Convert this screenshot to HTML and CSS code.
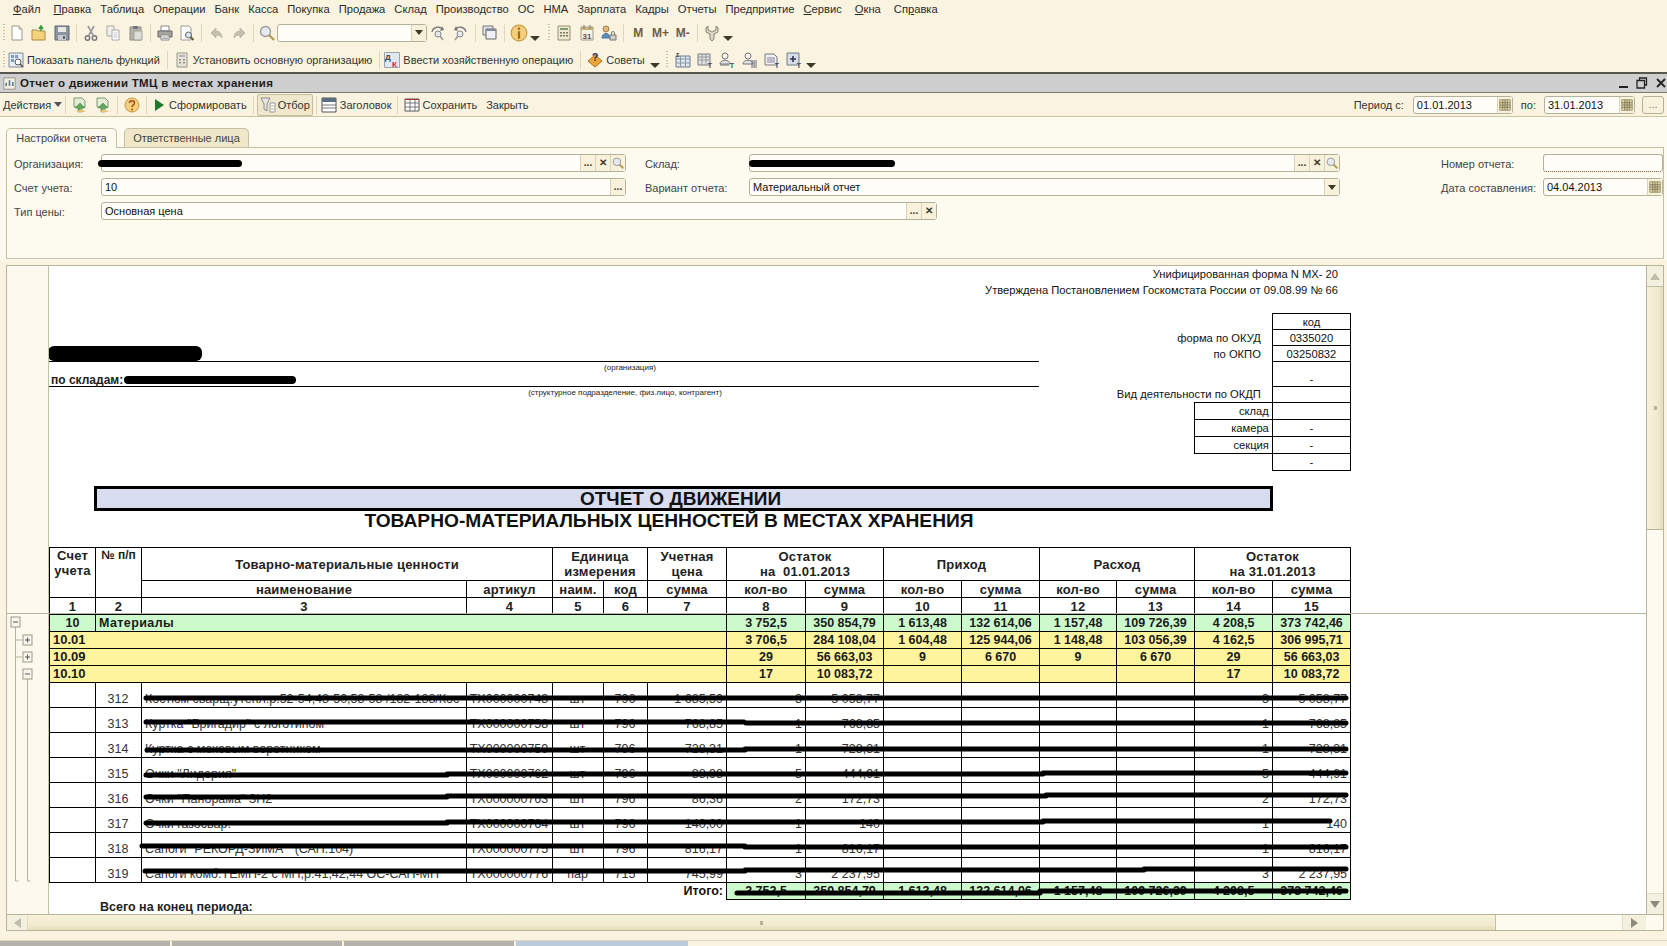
FILE: index.html
```html
<!DOCTYPE html>
<html lang="ru">
<head>
<meta charset="utf-8">
<title>Отчет о движении ТМЦ в местах хранения</title>
<link rel="stylesheet" href="styles.css">
</head>
<body>
<svg class="defs" width="0" height="0">
  <symbol id="i-new" viewBox="0 0 16 16"><path d="M3 1h7l3 3v11H3z" fill="#fff" stroke="#9a9a90"/><path d="M10 1v3h3" fill="#e8e8e0" stroke="#9a9a90"/></symbol>
  <symbol id="i-open" viewBox="0 0 16 16"><path d="M1 5h5l1 1h7v9H1z" fill="#f3d27a" stroke="#a98d4a"/><path d="M10 6V2M8 4l2-3 2 3" fill="none" stroke="#3d9a3d" stroke-width="1.6"/></symbol>
  <symbol id="i-save" viewBox="0 0 16 16"><path d="M1 1h14v14H1z" fill="#8c94a0" stroke="#5e6470"/><path d="M4 2h8v5H4z" fill="#e8e8e4"/><path d="M4 10h8v5H4z" fill="#c5c8cc"/><path d="M9 11h2v3H9z" fill="#5e6470"/></symbol>
  <symbol id="i-cut" viewBox="0 0 16 16"><circle cx="4.500" cy="13" r="2.200" fill="none" stroke="#777" stroke-width="1.400"/><circle cx="11.500" cy="13" r="2.200" fill="none" stroke="#777" stroke-width="1.400"/><path d="M5.500 11L11 1M10.500 11L5 1" stroke="#999" stroke-width="1.600"/></symbol>
  <symbol id="i-copy" viewBox="0 0 16 16"><path d="M2 1h7v10H2z" fill="#f0efe8" stroke="#aaa"/><path d="M7 5h7v10H7z" fill="#fff" stroke="#aaa"/><path d="M8.500 8h4M8.500 10h4M8.500 12h4" stroke="#c4c4c4"/></symbol>
  <symbol id="i-paste" viewBox="0 0 16 16"><path d="M2 2h11v13H2z" fill="#b3b3ab" stroke="#8c8c84"/><path d="M5 1h5v3H5z" fill="#777"/><path d="M6 6h8v9H6z" fill="#deded8" stroke="#a2a29a"/></symbol>
  <symbol id="i-print" viewBox="0 0 16 16"><path d="M4 1h8v5H4z" fill="#fff" stroke="#888"/><path d="M1 6h14v6H1z" fill="#a5a5a0" stroke="#666"/><path d="M4 10h8v5H4z" fill="#fff" stroke="#888"/><path d="M5 12h6M5 13.500h6" stroke="#aaa"/></symbol>
  <symbol id="i-preview" viewBox="0 0 16 16"><path d="M2 1h8l2 2v12H2z" fill="#fff" stroke="#999"/><circle cx="9.500" cy="10" r="3" fill="#d9e5f2" stroke="#666"/><path d="M11.500 12l3 3" stroke="#6b5a2a" stroke-width="2"/></symbol>
  <symbol id="i-undo" viewBox="0 0 16 16"><path d="M7 3L2 8l5 5V10c3 0 5 1 6 3 0-5-3-7-6-7z" fill="#c4c0b0" stroke="#aaa695" stroke-width=".6"/></symbol>
  <symbol id="i-redo" viewBox="0 0 16 16"><path d="M9 3l5 5-5 5V10c-3 0-5 1-6 3 0-5 3-7 6-7z" fill="#c4c0b0" stroke="#aaa695" stroke-width=".6"/></symbol>
  <symbol id="i-search" viewBox="0 0 16 16"><circle cx="6.500" cy="6.500" r="5" fill="#e4eaf0" stroke="#9a9a9a" stroke-width="1.300"/><path d="M10 10l5 5" stroke="#b39a5c" stroke-width="2.400"/></symbol>
  <symbol id="i-nav-l" viewBox="0 0 16 16"><path d="M2 7a6 6 0 0 1 11-2" fill="none" stroke="#777" stroke-width="1.300"/><path d="M12 1l2 4-4 1z" fill="#777"/><circle cx="8" cy="9" r="3" fill="#e4eaf0" stroke="#888"/><path d="M10 11l3 4" stroke="#999" stroke-width="1.500"/></symbol>
  <symbol id="i-nav-r" viewBox="0 0 16 16"><path d="M14 7a6 6 0 0 0-11-2" fill="none" stroke="#777" stroke-width="1.300"/><path d="M4 1L2 5l4 1z" fill="#777"/><circle cx="8" cy="9" r="3" fill="#e4eaf0" stroke="#888"/><path d="M6 11l-3 4" stroke="#999" stroke-width="1.500"/></symbol>
  <symbol id="i-win" viewBox="0 0 16 16"><path d="M1 1h10v9H1z" fill="#dfe3e8" stroke="#777"/><path d="M4 4h10v10H4z" fill="#eef0f3" stroke="#666"/><path d="M4 4h10v2H4z" fill="#7f8a99"/></symbol>
  <symbol id="i-info" viewBox="0 0 16 16"><circle cx="8" cy="8" r="7" fill="#f5cf7c" stroke="#c79a45"/><path d="M7 6.500h2V13H7zM7 3h2v2H7z" fill="#a5691e"/></symbol>
  <symbol id="i-help" viewBox="0 0 16 16"><circle cx="8" cy="8" r="7" fill="#f5cf7c" stroke="#c79a45"/><path d="M5.500 6c0-3 5-3 5 0 0 2-2.500 2-2.500 4M8 11.500v2" fill="none" stroke="#a5491e" stroke-width="1.500"/></symbol>
  <symbol id="i-calc" viewBox="0 0 16 16"><path d="M2 1h12v14H2z" fill="#eee9d2" stroke="#98936e"/><path d="M4 3h8v2H4z" fill="#7f9a6e"/><path d="M4 7h2v1.500H4zM7 7h2v1.500H7zM10 7h2v1.500h-2zM4 10h2v1.500H4zM7 10h2v1.500H7zM10 10h2v1.500h-2z" fill="#7a7a60"/></symbol>
  <symbol id="i-users" viewBox="0 0 16 16"><circle cx="5" cy="4" r="3" fill="#e6b678" stroke="#a27d48"/><path d="M1 13c0-6 8-6 8 0z" fill="#5c8fc0" stroke="#44709c"/><path d="M9 10h6v5H9z" fill="#cfcfc8" stroke="#777"/><path d="M10.500 10V8a1.500 1.500 0 0 1 3 0v2" fill="none" stroke="#777"/></symbol>
  <symbol id="i-wrench" viewBox="0 0 16 16"><path d="M4 1v4l4 2 4-2V1l2 2v4l-4 2v5l-2 2-2-2V9L2 7V3z" fill="#dedacb" stroke="#85816f"/></symbol>
  <symbol id="i-panel" viewBox="0 0 16 16"><path d="M1 1h14v14H1z" fill="#e8edf3" stroke="#7e8a9a"/><path d="M3 3h3v3H3zM7 3h3v3H7zM3 7h3v3H3z" fill="#7d9bc0"/><circle cx="10" cy="10" r="3" fill="#fff" stroke="#555"/><path d="M12 12l3 3" stroke="#555" stroke-width="1.600"/></symbol>
  <symbol id="i-build" viewBox="0 0 16 16"><path d="M3 1h10v14H3z" fill="#e6e4d8" stroke="#9a988a"/><path d="M5 3h6v2H5z" fill="#b0b7c0"/><path d="M5 7h2v1.500H5zM9 7h2v1.500H9zM5 10h2v1.500H5zM9 10h2v1.500H9z" fill="#8f8f84"/></symbol>
  <symbol id="i-filter" viewBox="0 0 16 16"><path d="M1 1h9L7 7v7l-3-2V7z" fill="#e6e6df" stroke="#888"/><path d="M10 6h5v9h-5z" fill="#fff" stroke="#999"/><path d="M10 9h5M10 12h5" stroke="#b6b6b0"/></symbol>
  <symbol id="i-head" viewBox="0 0 16 16"><path d="M1 1h14v14H1z" fill="#fff" stroke="#555"/><path d="M1 1h14v4H1z" fill="#5b6d80"/><path d="M1 8h14M1 11h14" stroke="#777"/></symbol>
  <symbol id="i-grid" viewBox="0 0 16 16"><path d="M1 2h14v12H1z" fill="#fff" stroke="#555"/><path d="M1 6h14M1 10h14M6 2v12M11 2v12" stroke="#777"/><path d="M1 2h14v1H1z" fill="#a33"/></symbol>
  <symbol id="i-imp" viewBox="0 0 16 16"><path d="M2 1h8l3 3v6H2z" fill="#e4ecd8" stroke="#7f9a6e"/><path d="M8 6L3 11h3v4h4v-4h3z" fill="#5fa85f" stroke="#3c7f3c" stroke-width=".5"/><path d="M9 12l5 3H4z" fill="#e3c277"/></symbol>
  <symbol id="i-rep" viewBox="0 0 16 16"><path d="M1 1h14v14H1z" fill="#f3efe0" stroke="#888"/><path d="M4 11V7M8 11V4M12 11V6" stroke="#5a7a9f" stroke-width="2"/></symbol>
  <symbol id="i-cells" viewBox="0 0 16 16"><path d="M1 1h14v14H1z" fill="#e6d9a5" stroke="#8a7f55"/><path d="M1 5h14M1 8h14M1 11h14M5 1v14M8 1v14M11 1v14" stroke="#6d6a50"/></symbol>
</svg>

<div class="app">
  <nav class="menu">
    <span class="m m-file"><u>Ф</u>айл</span><span class="m"><u>П</u>равка</span><span class="m">Таблица</span><span class="m">Операции</span><span class="m">Банк</span><span class="m">Касса</span><span class="m">Покупка</span><span class="m">Продажа</span><span class="m">Склад</span><span class="m">Производство</span><span class="m">ОС</span><span class="m">НМА</span><span class="m">Зарплата</span><span class="m">Кадры</span><span class="m">Отчеты</span><span class="m">Предприятие</span><span class="m m-srv"><u>С</u>ервис</span><span class="m m-win"><u>О</u>кна</span><span class="m">Сп<u>р</u>авка</span>
  </nav>

  <div class="toolbar tb1">
    <i class="grip"></i>
    <b class="btn"><svg class="ico"><use href="#i-new"/></svg></b>
    <b class="btn"><svg class="ico"><use href="#i-open"/></svg></b>
    <b class="btn"><svg class="ico"><use href="#i-save"/></svg></b>
    <i class="sep"></i>
    <b class="btn"><svg class="ico"><use href="#i-cut"/></svg></b>
    <b class="btn"><svg class="ico"><use href="#i-copy"/></svg></b>
    <b class="btn"><svg class="ico"><use href="#i-paste"/></svg></b>
    <i class="sep"></i>
    <b class="btn"><svg class="ico"><use href="#i-print"/></svg></b>
    <b class="btn"><svg class="ico"><use href="#i-preview"/></svg></b>
    <i class="sep"></i>
    <b class="btn"><svg class="ico"><use href="#i-undo"/></svg></b>
    <b class="btn"><svg class="ico"><use href="#i-redo"/></svg></b>
    <i class="sep"></i>
    <b class="btn btn-s"><svg class="ico"><use href="#i-search"/></svg></b>
    <div class="combo"><span class="combo-arrow"><i class="tri"></i></span></div>
    <b class="btn"><svg class="ico"><use href="#i-nav-l"/></svg></b>
    <b class="btn"><svg class="ico"><use href="#i-nav-r"/></svg></b>
    <i class="sep"></i>
    <b class="btn"><svg class="ico"><use href="#i-win"/></svg></b>
    <i class="sep"></i>
    <b class="btn"><svg class="ico ico-lg"><use href="#i-info"/></svg></b>
    <i class="drop"></i>
    <i class="grip grip-mid"></i>
    <b class="btn"><svg class="ico"><use href="#i-calc"/></svg></b>
    <b class="btn"><svg class="ico" viewBox="0 0 16 16"><path d="M2 2h12v13H2z" fill="#f6f2e2" stroke="#a29c82"/><path d="M2 2h12v3H2z" fill="#c9b27a"/><path d="M5 0v4M11 0v4" stroke="#777"/><text x="8" y="13.500" class="ico-text ico-31">31</text></svg></b>
    <b class="btn"><svg class="ico"><use href="#i-users"/></svg></b>
    <i class="sep"></i>
    <b class="btn mem">M</b><b class="btn mem">M+</b><b class="btn mem">M-</b>
    <i class="sep"></i>
    <b class="btn"><svg class="ico"><use href="#i-wrench"/></svg></b>
    <i class="drop"></i>
  </div>

  <div class="toolbar tb2">
    <i class="grip"></i>
    <span class="tool tool-first"><svg class="ico"><use href="#i-panel"/></svg>Показать панель функций</span>
    <i class="sep"></i>
    <span class="tool"><svg class="ico"><use href="#i-build"/></svg>Установить основную организацию</span>
    <i class="sep"></i>
    <span class="tool tool-tight"><svg class="ico" viewBox="0 0 16 16"><path d="M.5.5h15v15H.5z" fill="#e3e7ee" stroke="#9aa4b3"/><text x="1" y="8" class="ico-text ico-d">Д</text><text x="8" y="15" class="ico-text ico-k">К</text></svg>Ввести хозяйственную операцию</span>
    <i class="sep"></i>
    <span class="tool"><svg class="ico" viewBox="0 0 16 16"><path d="M1 9l7-6 7 6-7 6z" fill="#eda53a" stroke="#b06e18"/><text x="8" y="9" class="ico-text ico-q">?</text></svg>Советы</span>
    <i class="drop drop-tips"></i>
    <i class="grip grip-tips"></i>
    <b class="btn"><svg class="ico" viewBox="0 0 16 16"><path d="M1 4h14v11H1z" fill="#dfe6ee" stroke="#6f7c8c"/><path d="M1 7h14M1 11h14M5.500 4v11M10.500 4v11" stroke="#8a97a8"/><text x="1" y="5" class="ico-text ico-s5">Σ</text></svg></b>
    <b class="btn"><svg class="ico" viewBox="0 0 16 16"><path d="M1 2h12v11H1z" fill="#dfe3e8" stroke="#7a7a7a"/><path d="M1 5h12M1 8h12M5 2v11M9 2v11" stroke="#999"/><text x="13" y="16" class="ico-text ico-t">Т</text></svg></b>
    <b class="btn"><svg class="ico" viewBox="0 0 16 16"><circle cx="6" cy="4" r="3" fill="#f4f2ea" stroke="#777"/><path d="M1 12c0-5 10-5 10 0z" fill="#dfe3e8" stroke="#777"/><path d="M1 13h9" stroke="#777"/><text x="13" y="16" class="ico-text ico-t">Т</text></svg></b>
    <b class="btn"><svg class="ico" viewBox="0 0 16 16"><circle cx="6" cy="4" r="3" fill="#f4f2ea" stroke="#777"/><path d="M1 12c0-5 10-5 10 0z" fill="#dfe3e8" stroke="#777"/><path d="M9 9h6M9 11h6M9 13h6M9 15h6" stroke="#667"/></svg></b>
    <b class="btn"><svg class="ico" viewBox="0 0 16 16"><path d="M1 2h9l3 3v8H1z" fill="#eef0f3" stroke="#7a7a7a"/><path d="M3 6h8M3 8h8M3 10h8" stroke="#889"/><text x="13" y="16" class="ico-text ico-t">Т</text></svg></b>
    <b class="btn"><svg class="ico" viewBox="0 0 16 16"><path d="M1 1h12v12H1z" fill="#d6dde6" stroke="#6f7c8c"/><path d="M4 7h6M7 4v6" stroke="#335" stroke-width="1.600"/><text x="13" y="16" class="ico-text ico-t">Т</text></svg></b>
    <i class="drop"></i>
  </div>

  <header class="titlebar">
    <svg class="ico"><use href="#i-rep"/></svg>
    <span class="title">Отчет о движении ТМЦ в местах хранения</span>
    <span class="winctl">
      <i class="w-min"></i>
      <svg class="w-restore" viewBox="0 0 12 12"><path d="M3.500 3V1h7v7H8.500M1 3.500h7.500V11H1z" fill="none" stroke="#222" stroke-width="1.300"/></svg>
      <svg class="w-close" viewBox="0 0 10 10"><path d="M1 1l8 8M9 1l-8 8" stroke="#222" stroke-width="1.800"/></svg>
    </span>
  </header>

  <div class="cmdbar">
    <span class="cmd cmd-act">Действия<i class="tri tri-act"></i></span>
    <i class="sep"></i>
    <b class="btn"><svg class="ico"><use href="#i-imp"/></svg></b>
    <b class="btn"><svg class="ico"><use href="#i-imp"/></svg></b>
    <i class="sep"></i>
    <b class="btn"><svg class="ico"><use href="#i-help"/></svg></b>
    <i class="sep"></i>
    <span class="cmd cmd-run"><i class="play"></i>Сформировать</span>
    <i class="sep"></i>
    <span class="cmd cmd-on"><svg class="ico"><use href="#i-filter"/></svg>Отбор</span>
    <i class="sep sep-tight"></i>
    <span class="cmd cmd-head"><svg class="ico"><use href="#i-head"/></svg>Заголовок</span>
    <i class="sep"></i>
    <span class="cmd"><svg class="ico"><use href="#i-grid"/></svg>Сохранить</span>
    <span class="cmd cmd-close">Закрыть</span>
    <div class="period">
      <label class="period-l">Период с:</label>
      <div class="field f-date1"><span class="val">01.01.2013</span><span class="fbtn"><svg class="ico ico-s"><use href="#i-cells"/></svg></span></div>
      <label class="period-l2">по:</label>
      <div class="field f-date2"><span class="val">31.01.2013</span><span class="fbtn"><svg class="ico ico-s"><use href="#i-cells"/></svg></span></div>
      <div class="field f-more">...</div>
    </div>
  </div>

  <section class="formarea">
    <div class="tabs">
      <span class="tab tab-on">Настройки отчета</span>
      <span class="tab">Ответственные лица</span>
    </div>
    <div class="panel">
      <div class="frow">
        <label class="lab lab-a">Организация:</label>
        <div class="field f-a"><i class="ink ink-org"></i><span class="val"></span><span class="fbtn dots">...</span><span class="fbtn x">✕</span><span class="fbtn"><svg class="ico ico-s"><use href="#i-search"/></svg></span></div>
        <label class="lab lab-b">Склад:</label>
        <div class="field f-b"><i class="ink ink-sklad"></i><span class="val"></span><span class="fbtn dots">...</span><span class="fbtn x">✕</span><span class="fbtn"><svg class="ico ico-s"><use href="#i-search"/></svg></span></div>
        <label class="lab lab-c">Номер отчета:</label>
        <div class="field f-c f-dotted"></div>
      </div>
      <div class="frow">
        <label class="lab lab-a">Счет учета:</label>
        <div class="field f-a"><span class="val">10</span><span class="fbtn dots">...</span></div>
        <label class="lab lab-b">Вариант отчета:</label>
        <div class="field f-b"><span class="val">Материальный отчет</span><span class="fbtn"><i class="tri"></i></span></div>
        <label class="lab lab-c">Дата составления:</label>
        <div class="field f-c"><span class="val">04.04.2013</span><span class="fbtn"><svg class="ico ico-s"><use href="#i-cells"/></svg></span></div>
      </div>
      <div class="frow">
        <label class="lab lab-a">Тип цены:</label>
        <div class="field f-t"><span class="val">Основная цена</span><span class="fbtn dots">...</span><span class="fbtn x">✕</span></div>
      </div>
    </div>
  </section>

  <section class="report">
    <div class="report-main">
      <div class="gutter">
        <svg class="tree" viewBox="7 266 41 648">
          <path d="M15.500 627V881h3M27.500 678V881h3M16 640h6M16 657h6" fill="none" stroke="#b5b39c"/>
          <g fill="#f8f6ec" stroke="#9c9a88"><rect x="11" y="617" width="9" height="10"/><rect x="23" y="635" width="9" height="10"/><rect x="23" y="652" width="9" height="10"/><rect x="23" y="669" width="9" height="10"/></g>
          <path d="M13 622h5M25 640h5M27.500 637.500v5M25 657h5M27.500 654.500v5M25 674h5" stroke="#555"/>
        </svg>
      </div>
      <div class="sheet">
        <div class="form-note">Унифицированная форма N МХ- 20</div>
        <div class="form-note">Утверждена Постановлением Госкомстата России от 09.08.99 № 66</div>

        <div class="head">
          <div class="head-left">
            <div class="org-line"><i class="ink ink-name"></i></div>
            <div class="caption cap-org">(организация)</div>
            <div class="org-line org-line2">по складам:<i class="ink ink-wh"></i></div>
            <div class="caption cap-dep">(структурное подразделение, физ.лицо, контрагент)</div>
          </div>
          <table class="codes">
            <colgroup><col class="c-l"><col class="c-m"><col class="c-r"></colgroup>
            <tr class="r16"><td colspan="2" class="nb"></td><td class="cc">код</td></tr>
            <tr class="r16"><td colspan="2" class="nb rt">форма по ОКУД</td><td class="cc">0335020</td></tr>
            <tr class="r16"><td colspan="2" class="nb rt">по ОКПО</td><td class="cc">03250832</td></tr>
            <tr class="r25"><td colspan="2" class="nb"></td><td class="cc bot">-</td></tr>
            <tr class="r16"><td colspan="2" class="nb rt">Вид деятельности по ОКДП</td><td class="cc"></td></tr>
            <tr class="r17"><td class="nb"></td><td class="sub">склад</td><td class="cc"></td></tr>
            <tr class="r17"><td class="nb"></td><td class="sub">камера</td><td class="cc">-</td></tr>
            <tr class="r17"><td class="nb"></td><td class="sub">секция</td><td class="cc">-</td></tr>
            <tr class="r17"><td colspan="2" class="nb"></td><td class="cc">-</td></tr>
          </table>
        </div>

        <h1 class="doc-title">ОТЧЕТ О ДВИЖЕНИИ</h1>
        <h2 class="doc-sub">ТОВАРНО-МАТЕРИАЛЬНЫХ ЦЕННОСТЕЙ В МЕСТАХ ХРАНЕНИЯ</h2>

        <div class="tablewrap">
          <table class="grid">
            <colgroup>
              <col class="w46"><col class="w46"><col class="w325"><col class="w86"><col class="w51"><col class="w44"><col class="w79"><col class="w79"><col class="w78"><col class="w78"><col class="w78"><col class="w77"><col class="w78"><col class="w78"><col class="w78">
            </colgroup>
            <tr class="h33 hd">
              <td rowspan="2" class="top">Счет<br>учета</td><td rowspan="2" class="top nop">№ п/п</td><td colspan="2">Товарно-материальные ценности</td><td colspan="2">Единица<br>измерения</td><td>Учетная<br>цена</td><td colspan="2">Остаток<br>на&nbsp; 01.01.2013</td><td colspan="2">Приход</td><td colspan="2">Расход</td><td colspan="2">Остаток<br>на 31.01.2013</td>
            </tr>
            <tr class="h17 hd">
              <td>наименование</td><td>артикул</td><td>наим.</td><td>код</td><td>сумма</td><td>кол-во</td><td>сумма</td><td>кол-во</td><td>сумма</td><td>кол-во</td><td>сумма</td><td>кол-во</td><td>сумма</td>
            </tr>
            <tr class="h17 hd">
              <td>1</td><td>2</td><td>3</td><td>4</td><td>5</td><td>6</td><td>7</td><td>8</td><td>9</td><td>10</td><td>11</td><td>12</td><td>13</td><td>14</td><td>15</td>
            </tr>
            <tr class="h17 sum green">
              <td>10</td><td colspan="6" class="lt mat">Материалы</td><td>3 752,5</td><td>350 854,79</td><td>1 613,48</td><td>132 614,06</td><td>1 157,48</td><td>109 726,39</td><td>4 208,5</td><td>373 742,46</td>
            </tr>
            <tr class="h17 sum yellow">
              <td colspan="7" class="lt acc">10.01</td><td>3 706,5</td><td>284 108,04</td><td>1 604,48</td><td>125 944,06</td><td>1 148,48</td><td>103 056,39</td><td>4 162,5</td><td>306 995,71</td>
            </tr>
            <tr class="h17 sum yellow">
              <td colspan="7" class="lt acc">10.09</td><td>29</td><td>56 663,03</td><td>9</td><td>6 670</td><td>9</td><td>6 670</td><td>29</td><td>56 663,03</td>
            </tr>
            <tr class="h17 sum yellow">
              <td colspan="7" class="lt acc">10.10</td><td>17</td><td>10 083,72</td><td></td><td></td><td></td><td></td><td>17</td><td>10 083,72</td>
            </tr>
            <tr class="h25 dt"><td></td><td class="ct">312</td><td class="nm">Костюм сварщ.утепл.р.52-54,48-50,58-58 /182-188/Кос</td><td class="ct">ТХ000000748</td><td class="ct">шт</td><td class="ct">796</td><td>1 685,59</td><td>3</td><td>5 058,77</td><td></td><td></td><td></td><td></td><td>3</td><td>5 058,77</td></tr>
            <tr class="h25 dt"><td></td><td class="ct">313</td><td class="nm">Куртка "Бригадир" с логотипом</td><td class="ct">ТХ000000758</td><td class="ct">шт</td><td class="ct">796</td><td>768,85</td><td>1</td><td>768,85</td><td></td><td></td><td></td><td></td><td>1</td><td>768,85</td></tr>
            <tr class="h25 dt"><td></td><td class="ct">314</td><td class="nm">Куртка с меховым воротником</td><td class="ct">ТХ000000759</td><td class="ct">шт</td><td class="ct">796</td><td>728,31</td><td>1</td><td>728,31</td><td></td><td></td><td></td><td></td><td>1</td><td>728,31</td></tr>
            <tr class="h25 dt"><td></td><td class="ct">315</td><td class="nm">Очки "Лидерия"</td><td class="ct">ТХ000000762</td><td class="ct">шт</td><td class="ct">796</td><td>88,98</td><td>5</td><td>444,91</td><td></td><td></td><td></td><td></td><td>5</td><td>444,91</td></tr>
            <tr class="h25 dt"><td></td><td class="ct">316</td><td class="nm">Очки "Панорама" ЗН2</td><td class="ct">ТХ000000763</td><td class="ct">шт</td><td class="ct">796</td><td>86,36</td><td>2</td><td>172,73</td><td></td><td></td><td></td><td></td><td>2</td><td>172,73</td></tr>
            <tr class="h25 dt"><td></td><td class="ct">317</td><td class="nm">Очки газосвар.</td><td class="ct">ТХ000000764</td><td class="ct">шт</td><td class="ct">796</td><td>140,00</td><td>1</td><td>140</td><td></td><td></td><td></td><td></td><td>1</td><td>140</td></tr>
            <tr class="h25 dt"><td></td><td class="ct">318</td><td class="nm">Сапоги "РЕКОРД-ЗИМА"&nbsp; (САП.104)</td><td class="ct">ТХ000000775</td><td class="ct">шт</td><td class="ct">796</td><td>816,17</td><td>1</td><td>816,17</td><td></td><td></td><td></td><td></td><td>1</td><td>816,17</td></tr>
            <tr class="h25 dt"><td></td><td class="ct">319</td><td class="nm">Сапоги комб.ТЕМП-2 с МП,р.41,42,44 ОС-САП-МП</td><td class="ct">ТХ000000776</td><td class="ct">пар</td><td class="ct">715</td><td>745,99</td><td>3</td><td>2 237,95</td><td></td><td></td><td></td><td></td><td>3</td><td>2 237,95</td></tr>
            <tr class="h17 total">
              <td colspan="7" class="itogo">Итого:</td><td>3 752,5</td><td>350 854,79</td><td>1 613,48</td><td>132 614,06</td><td>1 157,48</td><td>109 726,39</td><td>4 208,5</td><td>373 742,46</td>
            </tr>
          </table>
          <svg class="strikes" viewBox="49 546 1302 353">
            <path d="M146 697H1346M146 721H744M746 722H1346M147 749H745M745 748H1346M146 774H447M447 773H1043M1043 772H1346M146 796H447M447 795H1046M1046 794H1346M146 822H447M447 821H1043M1043 820H1330M142 845H745M745 846H1346M145 870H745M745 869H1144M1144 868H1346M737 892H1040M1040 890H1346" fill="none" stroke="#000" stroke-width="5" stroke-linecap="round"/>
          </svg>
        </div>
        <div class="grand">Всего на конец периода:</div>
      </div>
      <div class="vscroll">
        <span class="sb-btn"><i class="arr arr-up"></i></span>
        <span class="sb-thumb-v"><i class="thumb-mark"></i></span>
        <span class="sb-track"></span>
        <span class="sb-btn"><i class="arr arr-down"></i></span>
      </div>
    </div>
    <div class="hscroll">
      <span class="sb-btn-h"><i class="arr arr-left"></i></span>
      <span class="sb-thumb-h"><i class="thumb-mark"></i></span>
      <span class="sb-track"></span>
      <span class="sb-btn-h sb-btn-r"><i class="arr arr-right"></i></span>
      <span class="sb-corner"></span>
    </div>
    <i class="freeze"></i>
  </section>

  <footer class="taskbar">
    <span class="task"></span><span class="task"></span><span class="task"></span><span class="task task-on"></span>
  </footer>
</div>
</body>
</html>
```

FILE: styles.css
```css
* { box-sizing: border-box; }
html, body { margin: 0; padding: 0; height: 100%; overflow: hidden; }
body { background: #f9f3e0; font-family: "Liberation Sans", Arial, sans-serif; font-size: 11px; color: #222; }
.defs { position: absolute; }
.app { width: 1667px; height: 946px; display: flex; flex-direction: column; overflow: hidden; }
i, b { font-style: normal; font-weight: normal; }

.ico { width: 16px; height: 16px; flex: none; }
.ico-lg { width: 18px; height: 18px; }
.ico-s { width: 12px; height: 12px; }
.ico-text { font-family: "Liberation Sans", sans-serif; font-weight: bold; }
.ico-31 { font-size: 8px; text-anchor: middle; fill: #555; }
.ico-d { font-size: 8px; fill: #444; }
.ico-k { font-size: 8px; fill: #c23; }
.ico-q { font-size: 11px; text-anchor: middle; fill: #335; }
.ico-t { font-size: 7px; text-anchor: middle; fill: #446; }
.ico-s5 { font-size: 6px; fill: #444; }

.menu { height: 18px; display: flex; align-items: center; padding-left: 13px; gap: 9px; font-size: 11.200px; color: #2b2b2b; flex: none; }
.m u { text-underline-offset: 1px; }
.m-file { margin-right: 4px; }
.m-srv { margin-right: 4px; }
.m-win { margin-right: 4px; }

.toolbar { display: flex; align-items: center; flex: none; }
.tb1 { height: 29px; padding-left: 3px; }
.tb2 { height: 25px; padding-left: 3px; }
.grip { width: 2px; height: 18px; margin-right: 1px; flex: none; background: repeating-linear-gradient(#c9c4aa 0 1px, transparent 1px 3px); }
.grip-mid { margin: 0 3px 0 8px; }
.grip-tips { margin: 0 4px 0 6px; }
.btn { width: 22.300px; height: 22px; display: flex; align-items: center; justify-content: center; flex: none; }
.btn-s { width: 20px; }
.sep { width: 1px; height: 18px; margin: 0 3px; background: #dcd7bd; flex: none; }
.sep-tight { margin-right: 1px; }
.mem { font-weight: bold; font-size: 12px; color: #6e5c48; }
.combo { width: 150px; height: 18px; border: 1px solid #b4b198; border-radius: 3px; background: #fffdf8; display: flex; justify-content: flex-end; flex: none; }
.combo-arrow { width: 15px; background: #f6efd9; border-left: 1px solid #d8d3b9; display: flex; align-items: center; justify-content: center; }
.tri { display: inline-block; width: 0; height: 0; border: 4px solid transparent; border-top: 5px solid #3d3a28; border-bottom: 0; }
.drop { width: 0; height: 0; border: 5px solid transparent; border-top: 5px solid #3d3a28; border-bottom: 0; margin-top: 12px; flex: none; }
.drop-tips { margin-left: 1px; }
.tool { display: flex; align-items: center; gap: 3px; white-space: nowrap; padding: 0 4px 0 3px; color: #333; }
.tool-first { padding-left: 2px; }
.tool-tight { padding-left: 1px; }

.titlebar { height: 21px; flex: none; display: flex; align-items: center; gap: 4px; padding-left: 3px; background: #cfcfcf; border-top: 2px solid #57574f; border-bottom: 1px solid #7b7b72; }
.titlebar .ico { width: 13px; height: 13px; }
.title { font-weight: bold; font-size: 11.500px; letter-spacing: .3px; color: #1d1d1d; }
.winctl { margin-left: auto; display: flex; align-items: center; gap: 8px; padding-right: 1px; }
.w-min { width: 9px; height: 2px; background: #222; margin-top: 8px; }
.w-restore { width: 12px; height: 12px; }
.w-close { width: 10px; height: 10px; }

.cmdbar { height: 24px; flex: none; display: flex; align-items: center; padding-left: 3px; border-bottom: 1px solid #c9c5a6; color: #333; }
.cmd { display: flex; align-items: center; gap: 3px; white-space: nowrap; padding: 0 3px; }
.cmd-act { padding: 0; gap: 3px; }
.tri-act { border-top-color: #555; }
.play { width: 0; height: 0; border-left: 9px solid #1f7a28; border-top: 6px solid transparent; border-bottom: 6px solid transparent; margin-right: 2px; margin-left: 2px; }
.cmd-on { height: 22px; border: 1px solid #c4bf9f; border-radius: 2px; background: #efe8cc; gap: 2px; padding: 0 2px; }
.cmd-head { padding-right: 2px; }
.cmd-close { margin-left: 3px; }
.period { margin-left: auto; display: flex; align-items: center; padding-right: 3px; }
.period-l { margin-right: 9px; }
.period-l2 { margin: 0 8px; }

.field { position: relative; height: 18px; border: 1px solid #b4b198; border-radius: 3px; background: #fffdf8; display: flex; align-items: stretch; flex: none; color: #111; }
.val { flex: 1; padding-left: 3px; line-height: 17px; overflow: hidden; white-space: nowrap; }
.fbtn { width: 15px; flex: none; border-left: 1px solid #d8d3b9; background: #f8f1dc; display: flex; align-items: center; justify-content: center; color: #3a3a2c; font-size: 10px; line-height: 1; }
.fbtn.dots { align-items: flex-end; padding-bottom: 3px; font-weight: bold; }
.fbtn.x { font-weight: bold; font-size: 10px; }
.f-date1 { width: 100px; }
.f-date2 { width: 91px; }
.f-more { width: 22px; margin-left: 7px; justify-content: center; background: #f8f1dc; line-height: 14px; color: #777; }

.formarea { height: 143px; flex: none; background: #fdfaf0; padding: 11px 3px 0 6px; }
.tabs { height: 19px; display: flex; gap: 7px; position: relative; z-index: 1; }
.tab { height: 19px; padding: 0; border: 1px solid #c4c0a4; border-bottom: 0; border-radius: 5px 5px 0 0; background: #efe7c8; line-height: 19px; color: #444; width: 125px; text-align: center; white-space: nowrap; }
.tab-on { width: 111px; height: 20px; background: #fdfaf0; }
.panel { height: 112px; border: 1px solid #c4c0a4; padding-top: 6px; display: flex; flex-direction: column; gap: 6px; }
.frow { display: flex; align-items: center; height: 18px; }
.lab { flex: none; color: #444; white-space: nowrap; padding-top: 1px; }
.lab-a { width: 94px; padding-left: 7px; }
.lab-b { width: 104px; margin-left: 19px; }
.lab-c { width: 102px; margin-left: 101px; }
.f-a { width: 525px; }
.f-b { width: 591px; }
.f-c { width: 120px; }
.f-t { width: 836px; }
.f-dotted { border-bottom: 1px dotted #7a4a3a; }

.ink { position: absolute; background: #000; border-radius: 6px; display: block; }
.ink-org { left: -4px; top: 5px; width: 144px; height: 7px; }
.ink-sklad { left: -1px; top: 5px; width: 146px; height: 7px; }
.ink-name { left: -1px; bottom: 0; width: 154px; height: 15px; }
.ink-wh { left: 75px; top: 2px; width: 172px; height: 8px; }

.report { position: relative; height: 666px; flex: none; margin: 5px 3px 0 6px; border: 1px solid #b9b59a; display: flex; flex-direction: column; background: #fff; }
.report-main { height: 648px; display: flex; flex: none; }
.gutter { width: 42px; flex: none; background: #fdf9ee; border-right: 1px solid #c4c0a4; }
.tree { display: block; width: 41px; height: 648px; }
.sheet { flex: 1; min-width: 0; overflow: hidden; font-size: 11.200px; color: #111; }
.form-note { width: 1289px; height: 16px; line-height: 16px; text-align: right; white-space: nowrap; }
.head { display: flex; margin-top: 15px; width: 1302px; }
.head-left { width: 990px; flex: none; }
.org-line { position: relative; height: 49px; border-bottom: 1px solid #000; }
.org-line2 { height: 13px; line-height: 12px; padding-left: 2px; font-size: 12px; font-weight: bold; color: #222; }
.caption { height: 12px; line-height: 12px; font-size: 8px; text-align: center; color: #222; white-space: nowrap; }
.cap-org { padding-left: 172px; }
.cap-dep { padding-left: 162px; }
.codes { border-collapse: collapse; table-layout: fixed; width: 312px; flex: none; font-size: 11.200px; }
.c-l { width: 155px; }
.c-m { width: 78px; }
.c-r { width: 78px; }
.codes td { padding: 1px 0 0; line-height: 13px; }
.r16 { height: 16px; }
.r17 { height: 17px; }
.r25 { height: 25px; }
.nb { border: 0; }
.rt { text-align: right; padding-right: 11px !important; white-space: nowrap; }
.cc { border: 1px solid #000; text-align: center; }
.bot { vertical-align: bottom; }
.sub { border: 1px solid #000; border-right: 0; text-align: right; padding-right: 3px !important; }
.doc-title { margin: 15px 0 0 45px; width: 1179px; height: 25px; padding-right: 6px; border: 3px solid #000; background: #d7dcef; text-align: center; font-size: 19px; line-height: 19px; font-weight: bold; color: #111; white-space: nowrap; }
.doc-sub { margin: 0; width: 1240px; height: 20px; line-height: 20px; text-align: center; font-size: 19.200px; font-weight: bold; color: #111; white-space: nowrap; }
.tablewrap { position: relative; width: 1302px; margin-top: 16px; }
.grid { border-collapse: collapse; table-layout: fixed; width: 1302px; font-size: 12px; }
.grid td { padding: 0 1px; line-height: 15px; border: 1px solid #000; overflow: hidden; white-space: nowrap; text-align: center; }
.w46 { width: 46px; }
.w325 { width: 325px; }
.w86 { width: 86px; }
.w51 { width: 51px; }
.w44 { width: 44px; }
.w79 { width: 79px; }
.w78 { width: 78px; }
.w77 { width: 77px; }
.h33 { height: 33px; }
.h17 { height: 17px; }
.h25 { height: 25px; }
.hd td { font-weight: bold; font-size: 13px; letter-spacing: .2px; color: #222; }
.hd td.top { vertical-align: top; }
.hd td.nop { font-size: 12px; letter-spacing: 0; }
.sum td { font-weight: bold; font-size: 12.500px; color: #1a1a1a; line-height: 14px; }
.grid td.lt { text-align: left; padding-left: 3px; }
.grid td.mat { letter-spacing: .4px; }
.grid td.acc { font-size: 13px; }
.green td { background: #ccfacd; }
.yellow td { background: #fff49e; }
.grid .dt td { vertical-align: bottom; text-align: right; padding: 0 3px 1px 2px; font-size: 12.500px; line-height: 14px; color: #333; }
.grid .dt td.ct { text-align: center; }
.grid .dt td.nm { text-align: left; padding-left: 3px; }
.total td { background: #ccfacd; font-weight: bold; font-size: 12.500px; line-height: 14px; }
.grid .total td.itogo { background: #fff; border: 0; text-align: right; padding-right: 3px; }
.strikes { position: absolute; left: 0; top: 0; width: 1302px; height: 353px; }
.grand { padding-left: 51px; font-weight: bold; font-size: 12.500px; line-height: 15px; color: #222; }

.vscroll { width: 17px; flex: none; border-left: 1px solid #b9b59a; display: flex; flex-direction: column; background: #fdfaf0; }
.sb-btn { height: 21px; flex: none; background: #f4f0e0; border-bottom: 1px solid #c4c0a4; display: flex; align-items: center; justify-content: center; }
.sb-btn:last-child { border-bottom: 0; border-top: 1px solid #e2ddc5; }
.sb-thumb-v { height: 243px; flex: none; background: linear-gradient(90deg, #f8f2dc, #f2e9cd 70%, #e5dcbb); border-bottom: 1px solid #b9b59a; display: flex; align-items: center; justify-content: center; }
.sb-track { flex: 1; background: #fdfaf0; }
.thumb-mark { width: 3px; height: 4px; background: #b6b29c; }
.hscroll { height: 16px; flex: none; border-top: 1px solid #b9b59a; display: flex; }
.sb-btn-h { width: 21px; flex: none; background: #f4f0e0; display: flex; align-items: center; justify-content: center; border-right: 1px solid #e2ddc5; }
.sb-btn-r { width: 24px; border-right: 0; border-left: 1px solid #e2ddc5; }
.sb-corner { width: 17px; flex: none; background: #fdfaf0; }
.sb-thumb-h { width: 1468px; flex: none; background: linear-gradient(#f8f2dc, #f2e9cd 70%, #e5dcbb); border-right: 1px solid #c4c0a4; display: flex; align-items: center; justify-content: center; }
.arr { width: 0; height: 0; display: block; }
.arr-up { border: 5px solid transparent; border-bottom: 7px solid #c0bcaa; border-top: 0; }
.arr-down { border: 5px solid transparent; border-top: 7px solid #8c8a78; border-bottom: 0; }
.arr-left { border: 5px solid transparent; border-right: 7px solid #c0bcaa; border-left: 0; }
.arr-right { border: 5px solid transparent; border-left: 7px solid #8c8a78; border-right: 0; }
.freeze { position: absolute; left: 0; right: 17px; top: 347px; height: 1px; background: #b4b89c; }

.taskbar { margin-top: 9px; height: 6px; flex: none; display: flex; gap: 2px; border-top: 1px solid #dcd8c2; }
.task { width: 170px; background: #b4b2aa; }
.task-on { width: 172px; background: #bccbdc; }
```
